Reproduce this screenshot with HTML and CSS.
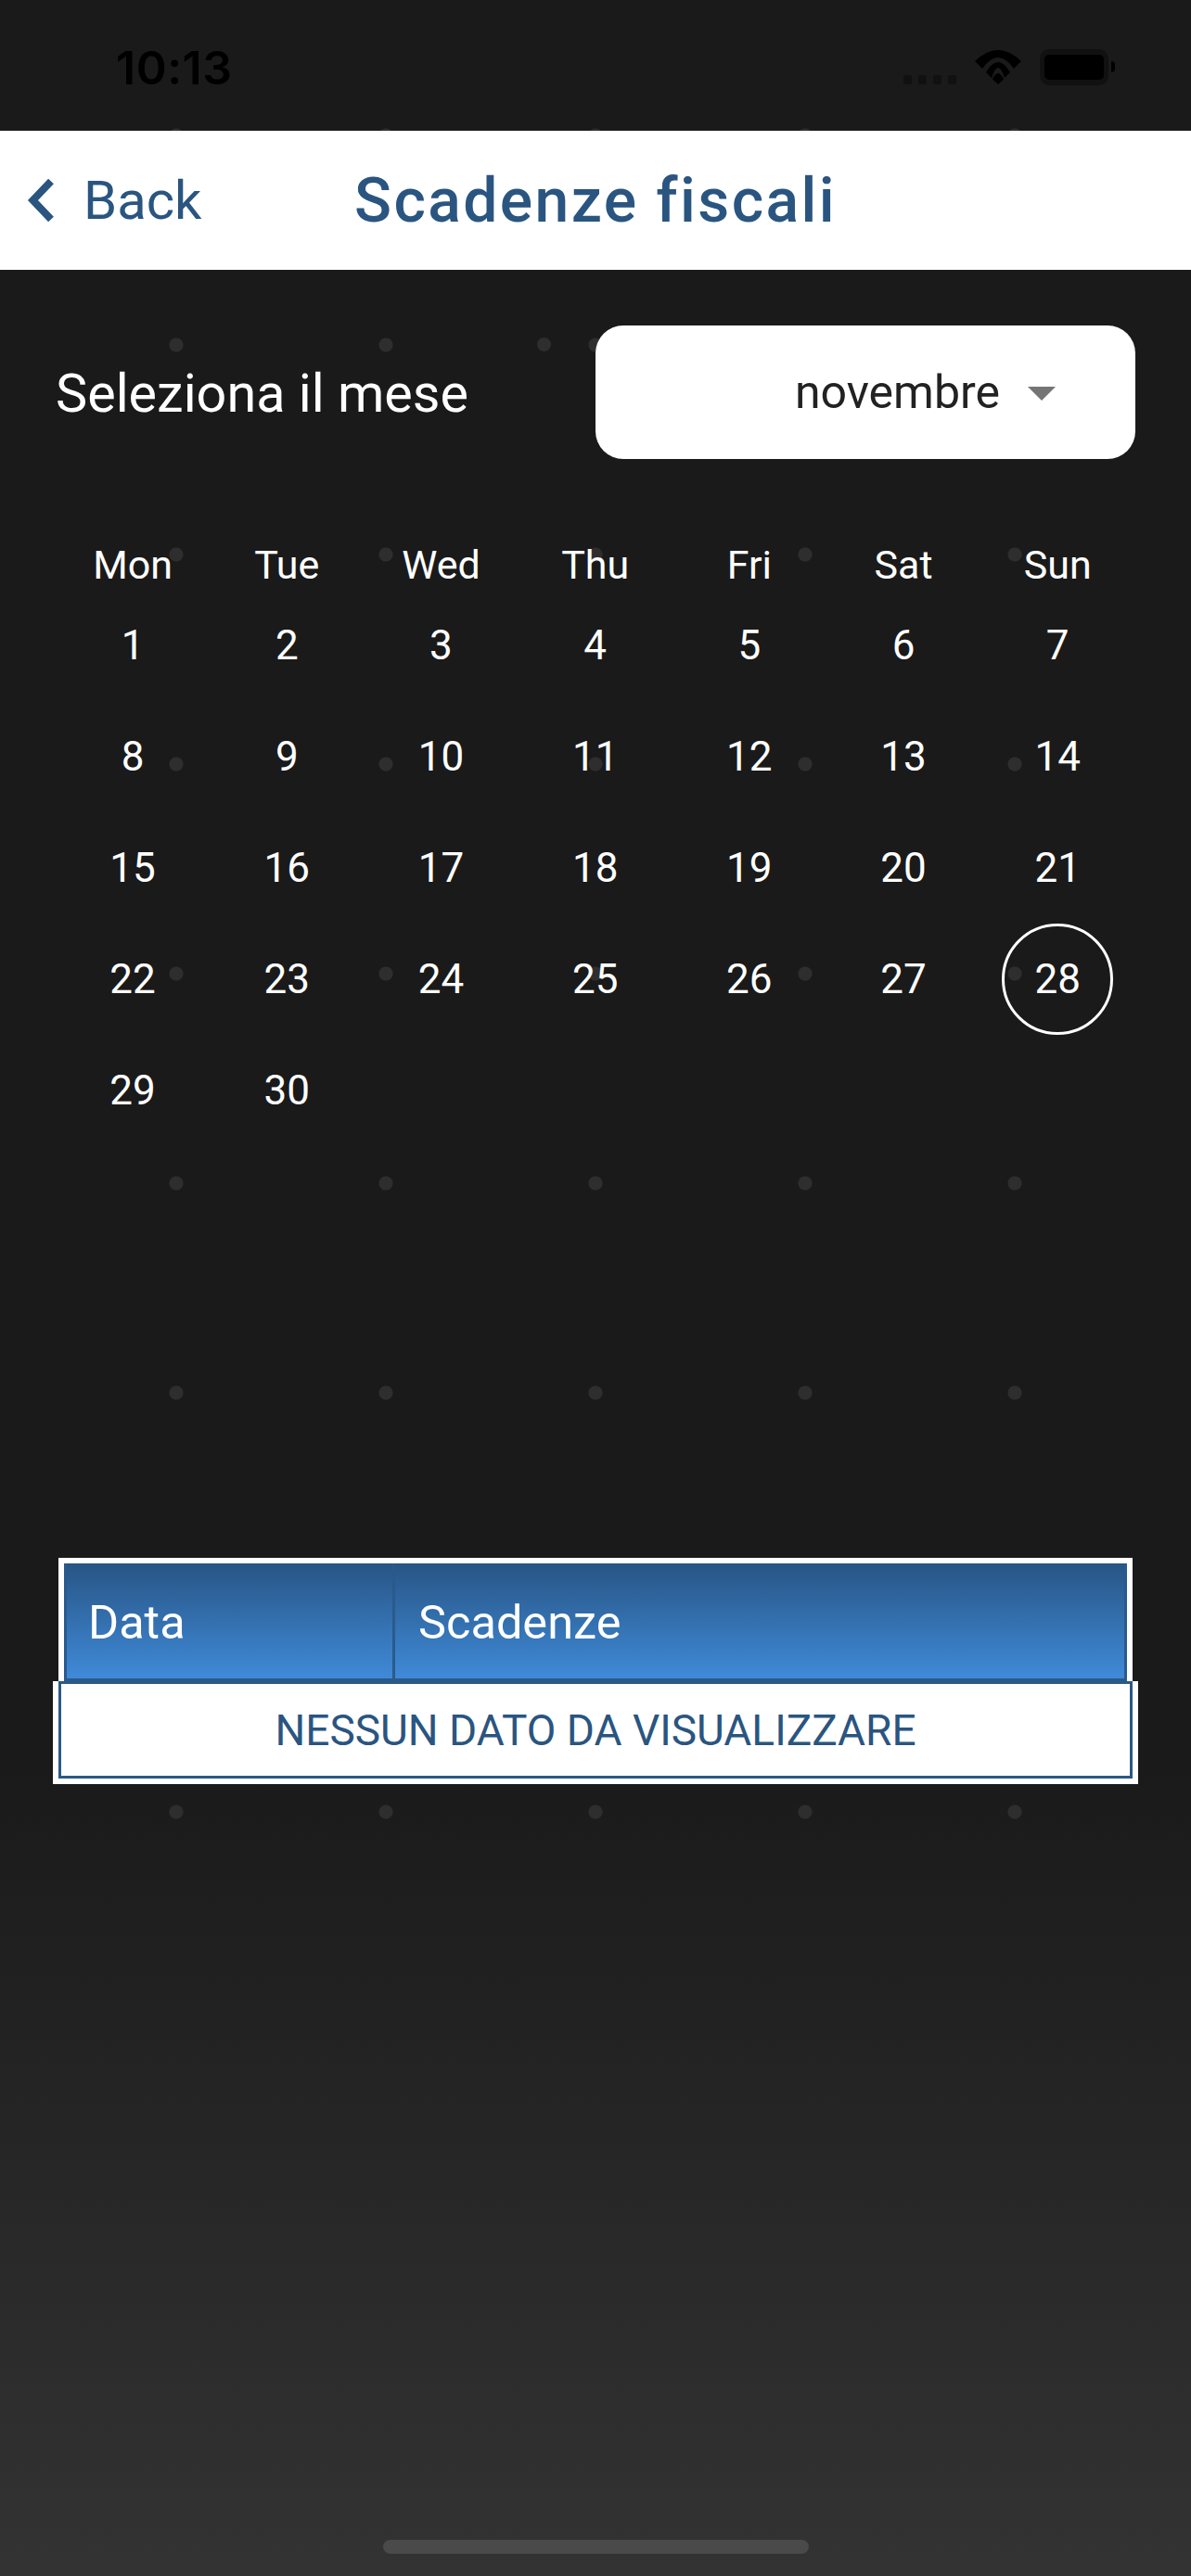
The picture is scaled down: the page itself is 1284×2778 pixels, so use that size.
FILE: index.html
```html
<!DOCTYPE html>
<html lang="en">
<head>
    <meta charset="UTF-8">
    <meta name="viewport" content="width=device-width, initial-scale=1.0">
    <title>Scadenze fiscali</title>
    <link rel="stylesheet" href="styles.css">
</head>
<body>
    <div class="dots"><span class="dot-extra"></span></div>

    <div class="status-bar">
        <span class="status-time">10:13</span>
        <div class="status-icons">
            <div class="signal"><span></span><span></span><span></span><span></span></div>
            <svg class="wifi" width="50" height="37" viewBox="0 0 50 37">
                <path d="M0 12 Q25 -12 50 12 L42 20 Q25 -4 8 20 Z"/>
                <path d="M12 24 Q25 2 38 24 L32 30 Q25 8 18 30 Z"/>
                <path d="M19 31.5 Q25 18.5 31 31.5 L25 37 Z"/>
            </svg>
            <div class="battery"><div class="battery-fill"></div></div>
            <div class="battery-cap"></div>
        </div>
    </div>

    <header class="top-nav">
        <a class="back-link" href="#">
            <svg class="back-icon" width="30" height="46" viewBox="0 0 30 46">
                <path d="M26 2.5 L6.5 23 L26 43.5" fill="none" stroke="#2a5580" stroke-width="8"/>
            </svg>
            <span>Back</span>
        </a>
        <h1 class="page-title">Scadenze fiscali</h1>
    </header>

    <main>
        <section class="month-row">
            <span class="month-label">Seleziona il mese</span>
            <div class="month-select">
                <span>novembre</span>
                <span class="caret"></span>
            </div>
        </section>

        <section class="calendar">
            <div class="day-name">Mon</div>
            <div class="day-name">Tue</div>
            <div class="day-name">Wed</div>
            <div class="day-name">Thu</div>
            <div class="day-name">Fri</div>
            <div class="day-name">Sat</div>
            <div class="day-name">Sun</div>
            <div class="day">1</div>
            <div class="day">2</div>
            <div class="day">3</div>
            <div class="day">4</div>
            <div class="day">5</div>
            <div class="day">6</div>
            <div class="day">7</div>
            <div class="day">8</div>
            <div class="day">9</div>
            <div class="day">10</div>
            <div class="day">11</div>
            <div class="day">12</div>
            <div class="day">13</div>
            <div class="day">14</div>
            <div class="day">15</div>
            <div class="day">16</div>
            <div class="day">17</div>
            <div class="day">18</div>
            <div class="day">19</div>
            <div class="day">20</div>
            <div class="day">21</div>
            <div class="day">22</div>
            <div class="day">23</div>
            <div class="day">24</div>
            <div class="day">25</div>
            <div class="day">26</div>
            <div class="day">27</div>
            <div class="day today"><span>28</span></div>
            <div class="day">29</div>
            <div class="day">30</div>
        </section>

        <section class="deadlines">
            <div class="table-head">
                <div class="col-date">Data</div>
                <div class="col-name">Scadenze</div>
            </div>
            <div class="table-empty">
                <div class="table-empty-inner">NESSUN DATO DA VISUALIZZARE</div>
            </div>
        </section>
    </main>

    <div class="home-bar"></div>
</body>
</html>
```
FILE: styles.css
```css
/* General styles */
html, body {
    margin: 0;
    padding: 0;
}

body {
    position: relative;
    width: 1284px;
    height: 2778px;
    overflow: hidden;
    font-family: 'Roboto', sans-serif;
    color: #fff;
    background: linear-gradient(to bottom, #1a1a1a 0, #1a1a1a 1900px, #333 2778px);
}

/* Faint dot pattern behind everything */
.dots {
    position: absolute;
    top: 33px;
    left: 0;
    width: 100%;
    height: 2034px;
    background-image: radial-gradient(circle at 190px 113px, #2e2e2e 7px, transparent 8px);
    background-size: 226px 226px;
}

.dot-extra {
    position: absolute;
    left: 579px;
    top: 331px;
    width: 15px;
    height: 15px;
    border-radius: 50%;
    background-color: #2e2e2e;
}

/* Status bar */
.status-bar {
    position: relative;
    height: 141px;
    box-sizing: border-box;
    padding: 0 82px 0 125px;
    display: flex;
    justify-content: space-between;
    align-items: flex-start;
    color: #000;
}

.status-time {
    margin-top: 45px;
    font-family: 'Inter', sans-serif;
    font-size: 50px;
    line-height: 56px;
    font-weight: 600;
    letter-spacing: 0.5px;
}

.status-icons {
    display: flex;
    align-items: flex-end;
    margin-top: 53px;
}

.signal {
    display: flex;
    gap: 7px;
    margin-right: 20px;
    margin-bottom: 1px;
}

.signal span {
    width: 9px;
    height: 10px;
    border-radius: 2px;
    background-color: #111;
}

.wifi {
    margin-right: 20px;
    margin-bottom: 1px;
}

.battery {
    box-sizing: border-box;
    width: 74px;
    height: 39px;
    padding: 6px 5px;
    border-radius: 10px;
    background-color: #111;
}

.battery-fill {
    height: 100%;
    border-radius: 5px;
    background-color: #000;
}

.battery-cap {
    width: 4px;
    height: 12px;
    margin: 0 0 14px 3px;
    border-radius: 0 6px 6px 0;
    background-color: #000;
}

/* Top nav */
.top-nav {
    position: relative;
    height: 150px;
    background-color: #fff;
    color: #2a5580;
    display: flex;
    align-items: center;
    justify-content: center;
}

.back-link {
    position: absolute;
    left: 29px;
    top: 52px;
    display: flex;
    align-items: center;
    gap: 31px;
    color: #2a5580;
    text-decoration: none;
    font-size: 58px;
    line-height: 46px;
}

.page-title {
    margin: 0;
    font-size: 66px;
    font-weight: 500;
    letter-spacing: 2.4px;
}

/* Main styles */
main {
    position: relative;
    padding: 60px 60px 0;
}

.month-row {
    display: flex;
    align-items: center;
    justify-content: space-between;
}

.month-label {
    font-size: 57.5px;
    padding-top: 3px;
}

.month-select {
    position: relative;
    width: 582px;
    height: 144px;
    box-sizing: border-box;
    padding-right: 146px;
    border-radius: 30px;
    background-color: #fff;
    color: #222;
    font-size: 50px;
    display: flex;
    align-items: center;
    justify-content: flex-end;
}

.caret {
    position: absolute;
    right: 86px;
    top: 66px;
    width: 0;
    height: 0;
    border-left: 15px solid transparent;
    border-right: 15px solid transparent;
    border-top: 15px solid #757575;
}

.calendar {
    margin-top: 89px;
    display: grid;
    grid-template-columns: repeat(7, 166.2px);
    grid-template-rows: 52px;
    grid-auto-rows: 120px;
}

.day-name {
    font-size: 43px;
    line-height: 50px;
    text-align: center;
}

.day {
    font-size: 44px;
    display: flex;
    align-items: center;
    justify-content: center;
}

.today span {
    box-sizing: border-box;
    width: 120px;
    height: 120px;
    line-height: 114px;
    text-align: center;
    border: 3px solid #fff;
    border-radius: 50%;
}

/* Deadlines table */
.deadlines {
    margin-top: 444px;
}

.table-head {
    box-sizing: border-box;
    margin: 0 3px;
    height: 133px;
    display: flex;
    border: 6px solid #fff;
    border-bottom: none;
}

.table-head > div {
    box-sizing: border-box;
    display: flex;
    align-items: center;
    background: linear-gradient(to bottom, #285585, #3f8ad8);
    border: 3px solid #2a5a8c;
    border-top: none;
    font-size: 50.5px;
    padding-top: 2px;
}

.col-date {
    width: 354px;
    padding-left: 23px;
    border-right: none !important;
}

.col-name {
    flex: 1;
    padding-left: 25px;
}

.table-empty {
    margin: 0 -3px;
    height: 111px;
    box-sizing: border-box;
    padding: 0 6px 6px;
    background-color: #fff;
}

.table-empty-inner {
    height: 100%;
    box-sizing: border-box;
    border: 3px solid #2a5a85;
    color: #2a5580;
    font-size: 46px;
    display: flex;
    align-items: center;
    justify-content: center;
}

/* Home indicator */
.home-bar {
    position: absolute;
    left: 413px;
    top: 2739px;
    width: 459px;
    height: 15px;
    border-radius: 8px;
    background-color: #4a4a4a;
}
```
